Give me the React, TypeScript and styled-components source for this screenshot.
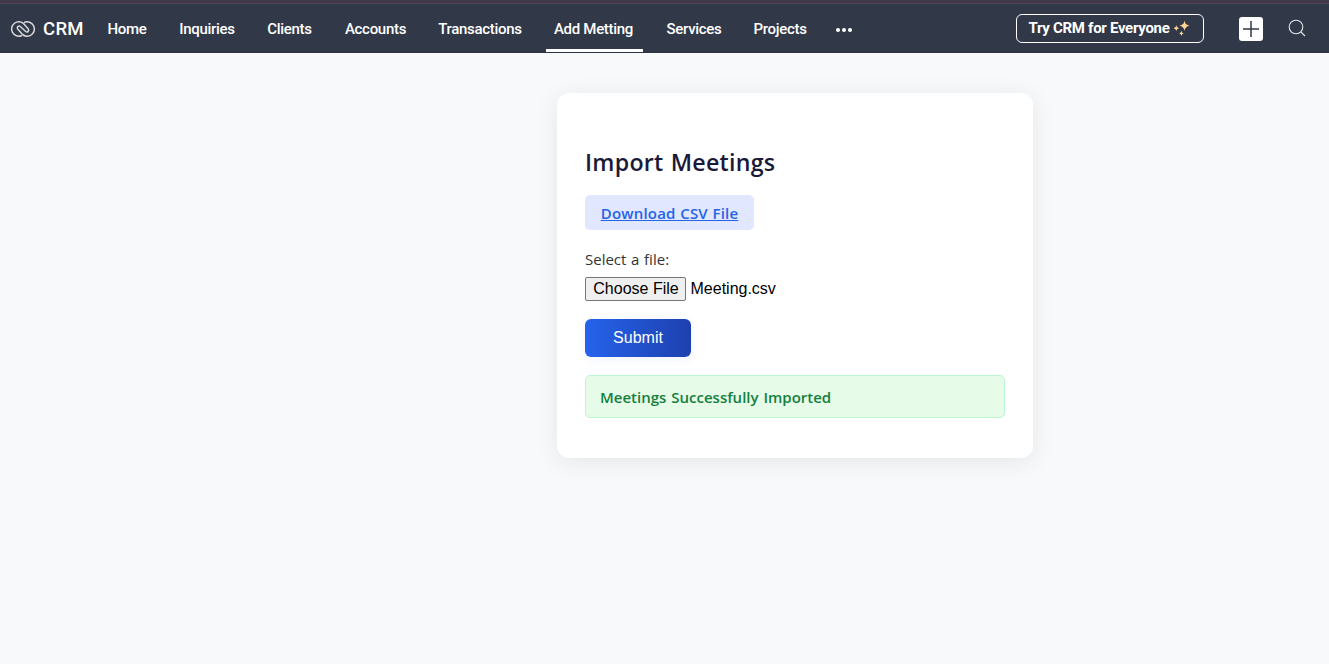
import React from "react";
import styled, { createGlobalStyle } from "styled-components";

const GlobalStyle = createGlobalStyle`
  * { box-sizing: border-box; }
  html, body { margin: 0; padding: 0; }
  body { background: #f8f9fb; overflow: hidden; }
`;

const Page = styled.div`
  min-height: 664px;
  background: #f8f9fb;
  font-family: "Open Sans", "Noto Sans", sans-serif;
`;

const Header = styled.header`
  height: 53px;
  display: flex;
  align-items: stretch;
  background: #313848;
  border-top: 3px solid #42364a;
  box-shadow: inset 0 1px 0 #4e4351, inset 0 -1px 0 #2e3247;
  color: #fff;
  font-family: Roboto, "Liberation Sans", sans-serif;
`;

const Brand = styled.div`
  width: 99.5px;
  padding: 2px 0 0 10px;
  display: flex;
  align-items: center;
  gap: 7px;
  font-size: 18.5px;
  font-weight: 500;
  letter-spacing: 0.3px;

  svg { display: block; }
  span { line-height: 22px; }
`;

const Nav = styled.nav`
  display: flex;
  gap: 16px;
`;

const NavItem = styled.a<{ $width: number; $active?: boolean }>`
  width: ${(p) => p.$width}px;
  display: flex;
  align-items: center;
  justify-content: center;
  padding: 5px 1px 0 0;
  border-bottom: 3px solid ${(p) => (p.$active ? "#fff" : "transparent")};
  margin-bottom: 1px;
  color: #fff;
  font-size: 15px;
  font-weight: 500;
  letter-spacing: -0.3px;
  white-space: nowrap;
  text-decoration: none;
`;

const Dots = styled.div`
  display: flex;
  align-items: center;
  gap: 2px;
  margin-left: 21.5px;
  padding-top: 4px;

  i { width: 4px; height: 4px; border-radius: 50%; background: #fff; }
`;

const Actions = styled.div`
  margin-left: auto;
  display: flex;
  align-items: center;
  padding: 0 23.5px 0 0;
`;

const TryButton = styled.button`
  width: 188px;
  height: 29px;
  display: flex;
  align-items: center;
  gap: 3px;
  padding: 0 0 0 11.5px;
  border: 1px solid #fff;
  border-radius: 6px;
  background: transparent;
  color: #fff;
  font-family: inherit;
  font-size: 15px;
  font-weight: 700;
  letter-spacing: -0.3px;
  white-space: nowrap;

  span { width: 142px; }
  svg { flex: none; }
`;

const AddButton = styled.button`
  width: 24px;
  height: 24px;
  margin: 1px 24.5px 0 35.5px;
  padding: 0;
  border: 0;
  border-radius: 3px;
  background: #fff;

  svg { display: block; }
`;

const SearchButton = styled.button`
  padding: 0;
  border: 0;
  background: transparent;

  svg { display: block; }
`;

const Card = styled.main`
  width: 476px;
  height: 365px;
  margin: 40px 0 0 557px;
  padding: 53px 28px 40px;
  display: flex;
  flex-direction: column;
  align-items: flex-start;
  background: #fff;
  border-radius: 12px;
  box-shadow: 0 4px 24px rgba(0, 0, 0, 0.08);
`;

const Title = styled.h2`
  margin: 0 0 17px;
  color: #1a1a38;
  font-size: 23.2px;
  line-height: 32px;
  font-weight: 600;
  letter-spacing: 0.25px;
  word-spacing: 1px;
  white-space: nowrap;
`;

const DownloadLink = styled.a`
  width: 169px;
  height: 35px;
  display: flex;
  justify-content: center;
  padding-top: 7px;
  border-radius: 5px;
  background: #e0e7ff;
  color: #2563eb;
  font-size: 15px;
  line-height: 22px;
  font-weight: 600;
  letter-spacing: 0.2px;
  word-spacing: 0.5px;
  text-decoration: underline;
  white-space: nowrap;
`;

const Label = styled.label`
  margin: 18px 0 7px;
  color: #333;
  font-size: 15px;
  line-height: 22px;
  word-spacing: 0.8px;
`;

const FileRow = styled.div`
  display: flex;
  align-items: center;
  gap: 4.5px;
  height: 24px;
  color: #000;
  font-family: "Liberation Sans", Arial, sans-serif;
  font-size: 16px;
  line-height: 22px;
`;

const ChooseButton = styled.button`
  width: 101px;
  height: 24px;
  padding: 0 0 0 1px;
  border: 1px solid #767676;
  border-radius: 2px;
  background: #efefef;
  color: #000;
  font: inherit;
  white-space: nowrap;
`;

const SubmitButton = styled.button`
  width: 106px;
  height: 38px;
  margin: 18px 0;
  padding: 0;
  border: 0;
  border-radius: 6px;
  background: linear-gradient(90deg, #2563eb 0%, #1e40af 100%);
  box-shadow: 0 2px 8px rgba(37, 99, 235, 0.08);
  color: #fff;
  font-family: "Liberation Sans", Arial, sans-serif;
  font-size: 16px;
`;

const Success = styled.div`
  width: 100%;
  height: 43px;
  padding: 10px 14px;
  border: 1px solid #bbf7d0;
  border-radius: 5px;
  background: #e6fbe8;
  color: #15803d;
  font-size: 15px;
  line-height: 22px;
  font-weight: 600;
  word-spacing: 1px;
  white-space: nowrap;
`;

const LogoIcon = () => (
  <svg width="26" height="18" viewBox="-13 -9 26 18" fill="none" stroke="#d6d7da" strokeWidth="1.5" strokeLinecap="round" strokeLinejoin="round">
    <path d="M-1.6 6.7A7.2 7.2 0 1 1 .9 -5.1L5.3 -.1A1.85 1.85 0 0 1 2.7 2.5L-2.7 -2.5A1.85 1.85 0 0 0 -5.3 .1L-.9 5.1A7.2 7.2 0 1 0 1.6 -6.7" />
  </svg>
);

const SparkleIcon = () => (
  <svg width="18" height="18" viewBox="0 0 18 18" fill="#ffd591">
    <path d="M11.5 1.5Q12 6 16.5 6.7Q12 7.4 11.5 12Q11 7.4 6.5 6.7Q11 6 11.5 1.5Z" />
    <path d="M3.3 6.3Q3.6 8.9 6 9.2Q3.6 9.5 3.3 12.1Q3 9.5.6 9.2Q3 8.9 3.3 6.3Z" />
    <path d="M8.4 11.8Q8.6 14.1 10.6 14.4Q8.6 14.7 8.4 17Q8.2 14.7 6.2 14.4Q8.2 14.1 8.4 11.8Z" />
  </svg>
);

const items = [
  { label: "Home", width: 56 },
  { label: "Inquiries", width: 72 },
  { label: "Clients", width: 61 },
  { label: "Accounts", width: 79 },
  { label: "Transactions", width: 98 },
  { label: "Add Metting", width: 97, active: true },
  { label: "Services", width: 72 },
  { label: "Projects", width: 68 },
];

export default function App() {
  return (
    <Page>
      <GlobalStyle />
      <Header>
        <Brand>
          <LogoIcon />
          <span>CRM</span>
        </Brand>
        <Nav>
          {items.map((item) => (
            <NavItem key={item.label} $width={item.width} $active={item.active}>
              {item.label}
            </NavItem>
          ))}
        </Nav>
        <Dots><i /><i /><i /></Dots>
        <Actions>
          <TryButton>
            <span>Try CRM for Everyone</span>
            <SparkleIcon />
          </TryButton>
          <AddButton aria-label="Add">
            <svg width="24" height="24" viewBox="0 0 24 24" stroke="#313848" strokeWidth="1.5">
              <path d="M12 4V20M4 12H20" />
            </svg>
          </AddButton>
          <SearchButton aria-label="Search">
            <svg width="18" height="18" viewBox="0 0 18 18" fill="none" stroke="#e8e9eb" strokeWidth="1.1">
              <circle cx="8" cy="8" r="6.8" />
              <path d="M12.8 12.8L17 17" />
            </svg>
          </SearchButton>
        </Actions>
      </Header>
      <Card>
        <Title>Import Meetings</Title>
        <DownloadLink>Download CSV File</DownloadLink>
        <Label>Select a file:</Label>
        <FileRow>
          <ChooseButton>Choose File</ChooseButton>
          <span>Meeting.csv</span>
        </FileRow>
        <SubmitButton>Submit</SubmitButton>
        <Success>Meetings Successfully Imported</Success>
      </Card>
    </Page>
  );
}
